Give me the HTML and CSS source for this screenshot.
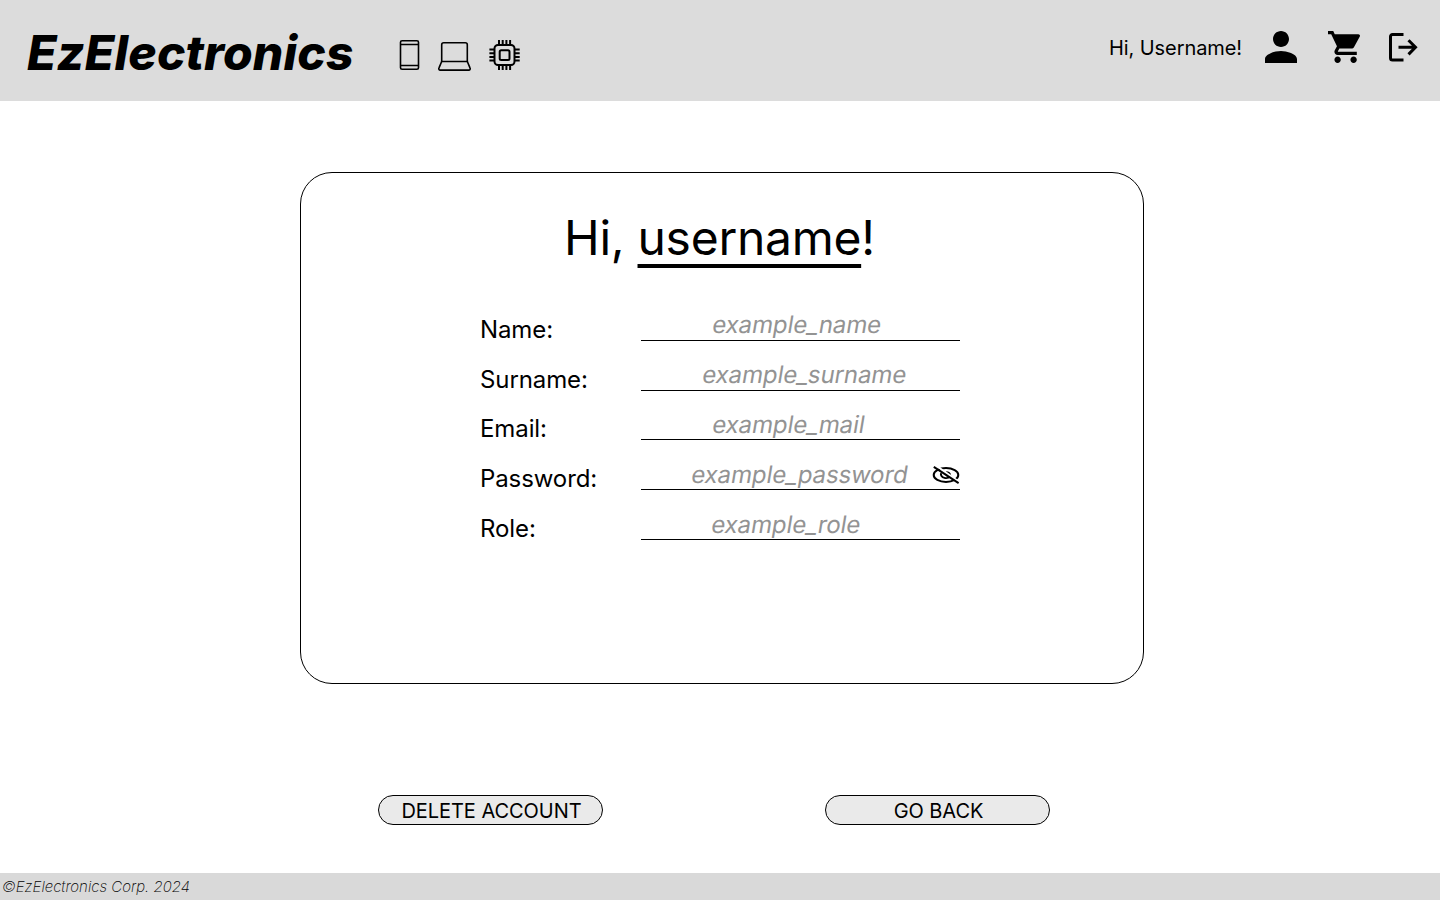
FILE: index.html
```html
<!DOCTYPE html>
<html lang="en">
<head>
<meta charset="utf-8">
<title>EzElectronics</title>
<link rel="stylesheet" href="styles.css">
</head>
<body>
<header class="header">
  <h1 class="brand">EzElectronics</h1>
  <nav class="categories">
    <svg class="icon phone" width="22" height="32" viewBox="0 0 22 32"><rect x="1.500" y="1.750" width="18" height="28.500" rx="1.600"/><path d="M2 5.500h18M2 26.500h18"/></svg>
    <svg class="icon laptop" width="36" height="32" viewBox="0 0 36 32"><path d="M5.700 22.500V5.800a2 2 0 0 1 2-2h21.600a2 2 0 0 1 2 2v16.700z"/><path d="M5.700 22.500L2.900 29.100a1.400 1.400 0 0 0 1.300 2h28.600a1.400 1.400 0 0 0 1.300-2l-2.800-6.600"/></svg>
    <svg class="icon chip" width="32" height="32" viewBox="0 0 32 32"><rect x="5.500" y="6" width="20" height="20" rx="3.500"/><rect x="10.700" y="11.200" width="9.800" height="9.800" rx="1.500"/><path d="M10 1v5M13.700 1v5M17.400 1v5M21.100 1v5M10 26v5M13.700 26v5M17.400 26v5M21.100 26v5M.4 10.500h5M.4 14.200h5M.4 17.900h5M.4 21.600h5M25.500 10.500h5.200M25.500 14.200h5.200M25.500 17.900h5.200M25.500 21.600h5.200"/></svg>
  </nav>
  <div class="account">
    <span class="greeting">Hi, Username!</span>
    <svg class="person" width="32" height="32" viewBox="4 4 16 16"><path d="M12 12c2.210 0 4-1.790 4-4s-1.790-4-4-4-4 1.790-4 4 1.790 4 4 4zm0 2c-2.670 0-8 1.340-8 4v2h16v-2c0-2.660-5.330-4-8-4z"/></svg>
    <svg class="cart" width="32" height="32" viewBox="1 2 20 20"><path d="M7 18c-1.100 0-1.990.9-1.990 2S5.900 22 7 22s2-.9 2-2-.9-2-2-2zM1 2v2h2l3.600 7.590-1.350 2.450c-.16.280-.25.610-.25.960 0 1.100.9 2 2 2h12v-2H7.420c-.14 0-.25-.11-.25-.25l.03-.12.900-1.630h7.450c.75 0 1.410-.41 1.750-1.030l3.580-6.490c.08-.14.120-.31.120-.48 0-.55-.45-1-1-1H5.210l-.94-2H1zm16 16c-1.100 0-1.990.9-1.990 2s.89 2 1.990 2 2-.9 2-2-.9-2-2-2z"/></svg>
    <svg class="icon logout" width="30" height="30" viewBox="0 0 30 30"><path d="M15.500 2.500H4.500a2 2 0 0 0-2 2v21.500a2 2 0 0 0 2 2h11"/><path d="M10.500 15.300H27M20.500 8.200l7 7.100-7 7.100"/></svg>
  </div>
</header>
<main class="main">
  <section class="card">
    <h2 class="title">Hi, <span class="name">username</span>!</h2>
    <div class="fields">
      <div class="row"><span class="label">Name:</span><div class="value"><span class="slanted">example_name</span></div></div>
      <div class="row"><span class="label">Surname:</span><div class="value surname"><span class="slanted">example_surname</span></div></div>
      <div class="row short"><span class="label">Email:</span><div class="value mail"><span class="slanted">example_mail</span></div></div>
      <div class="row"><span class="label">Password:</span><div class="value password"><span class="slanted">example_password</span>
        <svg class="icon eye" width="28" height="20" viewBox="0 0 28 20"><ellipse cx="14" cy="10" rx="12.300" ry="6.900"/><path d="M9.200 8.200a5 3.600 0 1 0 9.800 2.300M14 7.200a4 3 0 0 1 4 2.800M14 10.200h2"/><path class="gap" d="M3.800 .4l23.200 16.500"/><path d="M1.800 1.800l24.800 16.400"/></svg></div></div>
      <div class="row"><span class="label">Role:</span><div class="value role"><span class="slanted">example_role</span></div></div>
    </div>
  </section>
  <div class="actions">
    <button class="button">DELETE ACCOUNT</button>
    <button class="button back">GO BACK</button>
  </div>
</main>
<footer class="footer">©EzElectronics Corp. 2024</footer>
</body>
</html>
```
FILE: styles.css
```css
* { box-sizing: border-box; }
body {
  margin: 0;
  height: 900px;
  display: flex;
  flex-direction: column;
  overflow: hidden;
  background: #fff;
  color: #000;
  font-family: Inter, "Liberation Sans", sans-serif;
}
svg { display: block; flex: none; }
.header {
  height: 101px;
  flex: none;
  display: flex;
  align-items: flex-start;
  padding: 0 22px 0 27px;
  background: #dcdcdc;
}
.brand {
  margin: 24px 0 0;
  width: 372px;
  font-size: 48px;
  line-height: 58px;
  font-weight: 800;
  font-style: italic;
  letter-spacing: .12px;
}
.categories { display: flex; padding-top: 39px; }
.icon { fill: none; stroke: #000; }
.phone { stroke-width: 1.6; }
.laptop { stroke-width: 1.6; margin-left: 15px; }
.chip { stroke-width: 2; margin-left: 17px; }
.account { display: flex; margin-left: auto; padding-top: 31px; }
.greeting { font-size: 20px; line-height: 34px; margin-right: 23px; white-space: nowrap; letter-spacing: -.08px; }
.cart { margin-left: 31px; }
.logout { stroke-width: 3; margin: 1px 0 0 28px; }
.main { flex: 1; padding-top: 71px; }
.card {
  width: 844px;
  height: 512px;
  margin-left: 300px;
  padding-top: 36px;
  border: 1px solid #000;
  border-radius: 32px;
}
.title {
  margin: 0;
  padding-left: 263px;
  font-size: 48px;
  line-height: 58px;
  font-weight: 400;
  letter-spacing: -.28px;
  white-space: nowrap;
}
.name {
  text-decoration: underline;
  text-decoration-thickness: 3.5px;
  text-underline-offset: 9px;
  text-decoration-skip-ink: none;
}
.fields { margin: 24px 0 0 179px; width: 480px; }
.row { display: flex; height: 50px; align-items: flex-end; }
.short { height: 49px; }
.label { width: 161px; font-size: 24px; line-height: 30px; margin-bottom: -4px; letter-spacing: -.1px; }
.value {
  flex: 1;
  height: 31px;
  display: flex;
  padding-left: 70px;
  border-bottom: 1px solid #000;
  color: #939393;
  font-size: 24px;
  line-height: 30px;
}
.slanted {
  height: 30px;
  letter-spacing: -.1px;
  transform: skewX(-9.4deg);
  transform-origin: 0 24px;
}
.surname { padding-left: 60px; }
.mail { height: 30px; }
.password { padding-left: 49px; height: 30px; }
.role { padding-left: 69px; height: 30px; }
.eye { margin: 5px 0 0 auto; stroke-width: 2; }
.gap { stroke: #fff; }
.actions { display: flex; gap: 222px; margin: 111px 0 0 378px; }
.button {
  width: 225px;
  height: 30px;
  padding: 1px 0 0 2px;
  border: 1px solid #000;
  border-radius: 15px;
  background: #eaeaea;
  color: #000;
  font: 400 20px/28px Inter, "Liberation Sans", sans-serif;
  letter-spacing: -.05px;
}
.footer {
  height: 27px;
  flex: none;
  padding-left: 2px;
  background: #d9d9d9;
  font-size: 15px;
  line-height: 27px;
  font-style: italic;
  font-weight: 200;
}
```
